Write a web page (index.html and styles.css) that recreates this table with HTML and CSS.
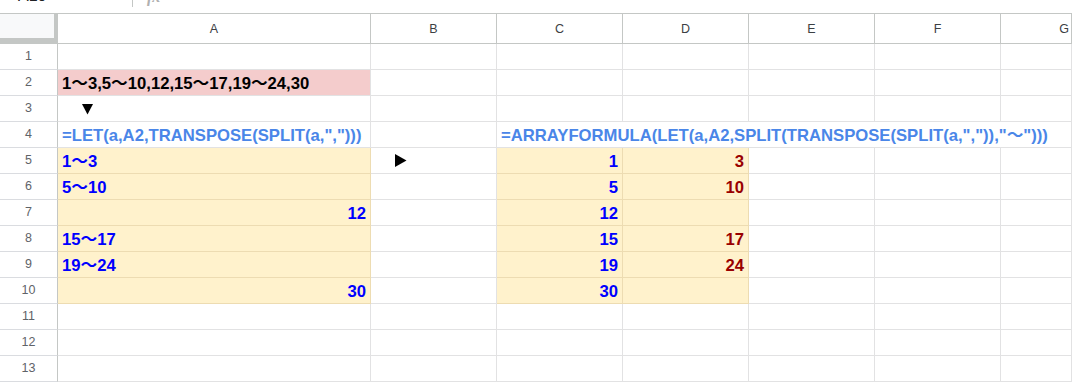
FILE: index.html
```html
<!DOCTYPE html>
<html>
<head>
<meta charset="utf-8">
<link rel="stylesheet" href="styles.css">
</head>
<body>
<div class="topbar">
  <div class="namebox"><span class="nbtext">A10</span></div>
  <div class="divider"></div>
  <div class="fxlabel">fx</div>
</div>
<div class="sheet">
  <div class="corner"></div>
  <div class="colh">A</div><div class="colh">B</div><div class="colh">C</div><div class="colh">D</div><div class="colh">E</div><div class="colh">F</div><div class="colh last">G</div>

  <div class="rowh">1</div><div class="c"></div><div class="c"></div><div class="c"></div><div class="c"></div><div class="c"></div><div class="c"></div><div class="c"></div>

  <div class="rowh">2</div><div class="c pink">1〜3,5〜10,12,15〜17,19〜24,30</div><div class="c"></div><div class="c"></div><div class="c"></div><div class="c"></div><div class="c"></div><div class="c"></div>

  <div class="rowh">3</div><div class="c arrowcell"><svg class="down" width="11" height="11" viewBox="0 0 11 11"><polygon points="0,0 11,0 5.5,10.5" fill="#000"/></svg></div><div class="c"></div><div class="c"></div><div class="c"></div><div class="c"></div><div class="c"></div><div class="c"></div>

  <div class="rowh">4</div><div class="c formula">=LET(a,A2,TRANSPOSE(SPLIT(a,",")))</div><div class="c"></div><div class="c formula span5">=ARRAYFORMULA(LET(a,A2,SPLIT(TRANSPOSE(SPLIT(a,",")),"〜")))</div>

  <div class="rowh">5</div><div class="c yel blue">1〜3</div><div class="c arrowcell"><svg class="right" width="12" height="13" viewBox="0 0 12 13"><polygon points="0,0 11.5,6.5 0,13" fill="#000"/></svg></div><div class="c yel blue r">1</div><div class="c yel red r">3</div><div class="c"></div><div class="c"></div><div class="c"></div>

  <div class="rowh">6</div><div class="c yel blue">5〜10</div><div class="c"></div><div class="c yel blue r">5</div><div class="c yel red r">10</div><div class="c"></div><div class="c"></div><div class="c"></div>

  <div class="rowh">7</div><div class="c yel blue r">12</div><div class="c"></div><div class="c yel blue r">12</div><div class="c yel red r"></div><div class="c"></div><div class="c"></div><div class="c"></div>

  <div class="rowh">8</div><div class="c yel blue">15〜17</div><div class="c"></div><div class="c yel blue r">15</div><div class="c yel red r">17</div><div class="c"></div><div class="c"></div><div class="c"></div>

  <div class="rowh">9</div><div class="c yel blue">19〜24</div><div class="c"></div><div class="c yel blue r">19</div><div class="c yel red r">24</div><div class="c"></div><div class="c"></div><div class="c"></div>

  <div class="rowh">10</div><div class="c yel blue r">30</div><div class="c"></div><div class="c yel blue r">30</div><div class="c yel red r"></div><div class="c"></div><div class="c"></div><div class="c"></div>

  <div class="rowh">11</div><div class="c"></div><div class="c"></div><div class="c"></div><div class="c"></div><div class="c"></div><div class="c"></div><div class="c"></div>

  <div class="rowh">12</div><div class="c"></div><div class="c"></div><div class="c"></div><div class="c"></div><div class="c"></div><div class="c"></div><div class="c"></div>

  <div class="rowh">13</div><div class="c"></div><div class="c"></div><div class="c"></div><div class="c"></div><div class="c"></div><div class="c"></div><div class="c"></div>
</div>
</body>
</html>
```

FILE: styles.css
```css
* { box-sizing: border-box; }
html, body {
  margin: 0;
  padding: 0;
  background: #fff;
  width: 1072px;
  height: 382px;
  overflow: hidden;
  font-family: "Liberation Sans", Arial, "Noto Sans CJK JP", sans-serif;
}
.topbar {
  height: 13px;
  display: flex;
  overflow: hidden;
}
.namebox {
  width: 132px;
  height: 13px;
  overflow: hidden;
  padding-left: 18px;
}
.nbtext {
  display: block;
  margin-top: -13px;
  font-size: 16px;
  line-height: 18px;
  color: #202124;
}
.divider {
  width: 1px;
  height: 7px;
  background: #c4c7c5;
}
.fxlabel {
  margin-left: 14px;
  margin-top: -11px;
  font-family: "Liberation Serif", serif;
  font-style: italic;
  font-weight: bold;
  font-size: 16px;
  line-height: 16px;
  color: #b0b0b0;
}
.sheet {
  display: grid;
  grid-template-columns: 58px 313px 126px 126px 126px 126px 126px 71px;
  grid-template-rows: 30px repeat(13, 26px);
  border-top: 1px solid #c4c7c5;
}
.corner {
  background: #f8f9fa;
  border-right: 4px solid #c4c7c5;
  border-bottom: 6px solid #c4c7c5;
}
.colh {
  border-right: 1px solid #c4c7c5;
  border-bottom: 1px solid #c4c7c5;
  display: flex;
  align-items: center;
  justify-content: center;
  font-size: 12.5px;
  color: #3c4043;
  padding-top: 1px;
}
.colh.last {
  justify-content: flex-end;
  padding-right: 2px;
}
.rowh {
  border-right: 1px solid #c4c7c5;
  border-bottom: 1px solid #dadce0;
  display: flex;
  align-items: center;
  justify-content: center;
  font-size: 12.5px;
  color: #5f6368;
  padding-bottom: 1px;
}
.c {
  border-right: 1px solid #e2e2e3;
  border-bottom: 1px solid #e2e2e3;
  display: flex;
  align-items: flex-end;
  padding: 0 4px 1px 4px;
  white-space: nowrap;
  font-size: 16.67px;
  line-height: 20px;
  font-weight: bold;
  color: #000;
}
.pink { background: #f4cccc; }
.yel {
  background: #fff2cc;
  border-color: #eddcb2;
}
.blue { color: #0000ff; }
.red { color: #990000; }
.r { justify-content: flex-end; }
.formula { color: #4a86e8; }
.span5 {
  grid-column: span 5;
  overflow: visible;
}
.arrowcell {
  align-items: center;
  padding: 0;
}
.down { margin-left: 24px; margin-top: 2px; }
.right { margin-left: 24px; }
```
